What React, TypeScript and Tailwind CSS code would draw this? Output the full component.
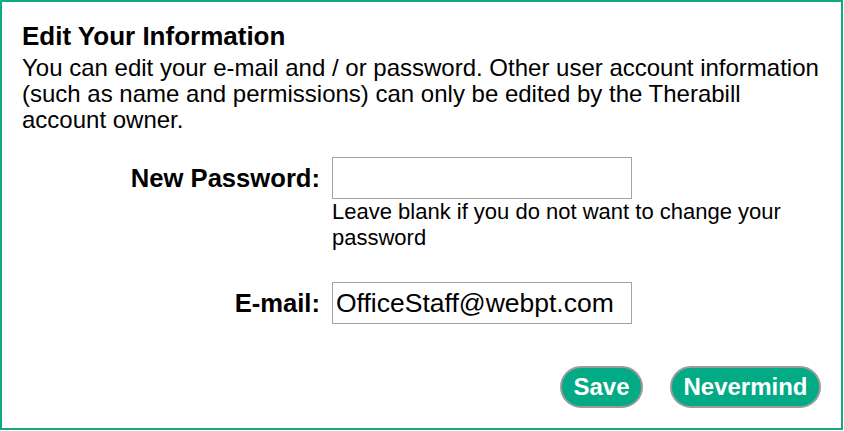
import { useState } from "react";

export default function App() {
  const [password, setPassword] = useState("");
  const [email, setEmail] = useState("OfficeStaff@webpt.com");

  return (
    <div className="w-[843px] h-[430px] border-2 border-[#0eaa84] bg-white text-black font-['Liberation_Sans',Arial,sans-serif] pt-[18px] pl-[20px] pr-[20px] flex flex-col">
      <h1 className="text-[26px] leading-[32px] font-bold">Edit Your Information</h1>
      <p className="text-[24px] leading-[26px] mt-[3px]">
        You can edit your e-mail and / or password. Other user account information (such as name
        and permissions) can only be edited by the Therabill
        <br />
        account owner.
      </p>

      <div className="grid grid-cols-[298px_1fr] gap-x-[12px] mt-[24px]">
        <label className="h-[42px] flex items-center justify-end text-[25.6px] font-bold">
          New Password:
        </label>
        <div>
          <input
            type="password"
            value={password}
            onChange={(e) => setPassword(e.target.value)}
            className="block w-[300px] h-[42px] border border-[#a3a3a3] px-[3px] text-[26px] outline-none"
          />
          <p className="text-[22px] leading-[26px] pr-[20px]">
            Leave blank if you do not want to change your password
          </p>
        </div>

        <label className="h-[42px] mt-[31px] flex items-center justify-end text-[25.6px] font-bold">
          E-mail:
        </label>
        <div className="mt-[31px]">
          <input
            type="text"
            value={email}
            onChange={(e) => setEmail(e.target.value)}
            className="block w-[300px] h-[42px] border border-[#a3a3a3] px-[3px] text-[26.5px] outline-none"
          />
        </div>
      </div>

      <div className="flex justify-end gap-[27px] mt-[42px]">
        <button className="w-[83px] h-[42px] rounded-full border-2 border-[#9b9b9b] bg-[#02ab85] text-white text-[24px] font-bold">
          Save
        </button>
        <button className="w-[151px] h-[42px] rounded-full border-2 border-[#9b9b9b] bg-[#02ab85] text-white text-[24px] font-bold">
          Nevermind
        </button>
      </div>
    </div>
  );
}
